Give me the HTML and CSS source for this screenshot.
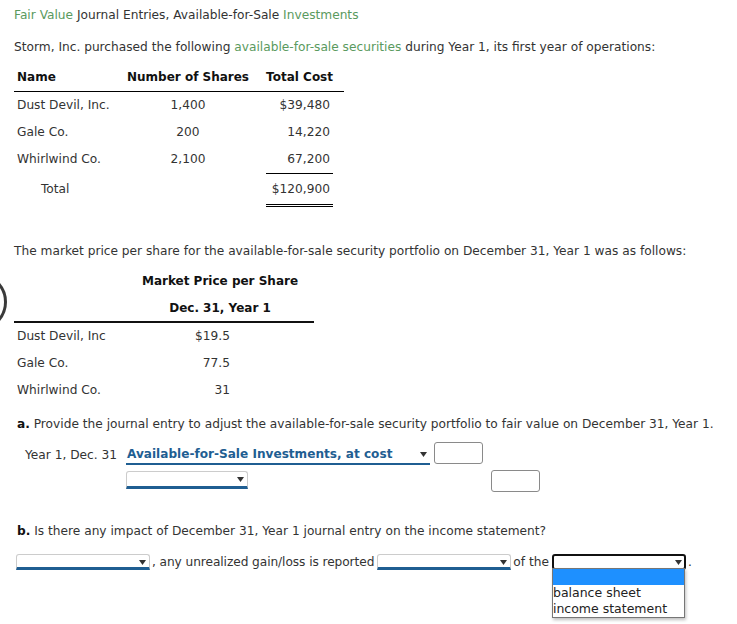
FILE: index.html
```html
<!DOCTYPE html>
<html>
<head>
<meta charset="utf-8">
<link rel="stylesheet" href="styles.css">
</head>
<body>
<div class="page">
  <div class="title"><span class="term">Fair Value</span> Journal Entries, Available-for-Sale <span class="term">Investments</span></div>
  <p class="intro">Storm, Inc. purchased the following <span class="term">available-for-sale securities</span> during Year 1, its first year of operations:</p>

  <div class="cost-table">
    <div class="th c1">Name</div>
    <div class="th c2">Number of Shares</div>
    <div class="th c3">Total Cost</div>
    <div class="th c4"></div>

    <div class="td c1">Dust Devil, Inc.</div>
    <div class="td c2">1,400</div>
    <div class="td c3">$39,480</div>
    <div class="td c4"></div>

    <div class="td c1">Gale Co.</div>
    <div class="td c2">200</div>
    <div class="td c3">14,220</div>
    <div class="td c4"></div>

    <div class="td c1">Whirlwind Co.</div>
    <div class="td c2">2,100</div>
    <div class="td c3 sub-line">67,200</div>
    <div class="td c4"></div>

    <div class="td c1 total-label">Total</div>
    <div class="td c2 total-row"></div>
    <div class="td c3 total-val">$120,900</div>
    <div class="td c4 total-row"></div>
  </div>

  <p class="market">The market price per share for the available-for-sale security portfolio on December 31, Year 1 was as follows:</p>

  <div class="price-table">
    <div class="ph">Market Price per Share</div>
    <div class="ph ph2">Dec. 31, Year 1</div>
    <div class="prow"><span class="pn">Dust Devil, Inc</span><span class="pv">$19.5</span></div>
    <div class="prow"><span class="pn">Gale Co.</span><span class="pv">77.5</span></div>
    <div class="prow"><span class="pn">Whirlwind Co.</span><span class="pv">31</span></div>
  </div>

  <p class="question qa"><b>a.</b> Provide the journal entry to adjust the available-for-sale security portfolio to fair value on December 31, Year 1.</p>

  <div class="entry-row">
    <span class="date">Year 1, Dec. 31</span>
    <span class="sel sel-filled sel-acct">Available-for-Sale Investments, at cost<svg class="arrow" width="7" height="5" viewBox="0 0 7 5"><path d="M0 0H7L3.5 5Z"/></svg></span>
    <span class="amt"></span>
  </div>
  <div class="entry-row row2">
    <span class="sel sel-credit"><svg class="arrow" width="7" height="5" viewBox="0 0 7 5"><path d="M0 0H7L3.5 5Z"/></svg></span>
    <span class="amt amt-credit"></span>
  </div>

  <p class="question qb"><b>b.</b> Is there any impact of December 31, Year 1 journal entry on the income statement?</p>

  <div class="answer-row">
    <span class="sel sel-b"><svg class="arrow" width="7" height="5" viewBox="0 0 7 5"><path d="M0 0H7L3.5 5Z"/></svg></span><span class="txt tight">, any unrealized gain/loss is reported</span>
    <span class="sel sel-b sel-b2"><svg class="arrow" width="7" height="5" viewBox="0 0 7 5"><path d="M0 0H7L3.5 5Z"/></svg></span><span class="txt of">of the</span>
    <div class="sel-wrap">
      <span class="sel sel-b sel-focus"><svg class="arrow" width="7" height="5" viewBox="0 0 7 5"><path d="M0 0H7L3.5 5Z"/></svg></span>
      <div class="listbox">
        <div class="opt opt-hl"></div>
        <div class="opt">balance sheet</div>
        <div class="opt">income statement</div>
      </div>
    </div><span class="txt">.</span>
  </div>
</div>
<div class="side-circle"></div>
</body>
</html>
```

FILE: styles.css
```css
html, body {
  margin: 0;
  padding: 0;
  background: #fff;
}
body {
  font-family: "DejaVu Sans", Verdana, sans-serif;
  font-size: 12.2px;
  color: #333;
  line-height: 16px;
  min-height: 624px;
  position: relative;
}
.page {
  padding: 7px 0 0 14px;
}
.term {
  color: #5a9a5e;
}
.title {
  height: 16px;
}
p {
  margin: 0;
}
.intro {
  margin-top: 16px;
}

/* cost table */
.cost-table {
  display: grid;
  grid-template-columns: 108px 144px 67px 11px;
  width: 330px;
  margin-top: 12px;
}
.th {
  font-weight: bold;
  font-size: 12px;
  color: #111;
  padding: 2px 0 6px;
  border-bottom: 1px solid #000;
}
.td {
  height: 27px;
  line-height: 27px;
}
.c1 { padding-left: 3px; }
.c2 { text-align: center; padding-right: 12px; }
.c3 { text-align: right; }
.td.c3 { padding-right: 3px; }
.sub-line {
  border-bottom: 1px solid #000;
}
.total-label {
  padding-left: 27px;
  height: 30px;
  line-height: 30px;
}
.total-row {
  height: 30px;
}
.total-val {
  height: 30px;
  line-height: 30px;
  border-bottom: 3px double #000;
}

/* market paragraph */
.market {
  margin-top: 36px;
}
.price-table {
  width: 300px;
  margin-top: 14px;
}
.ph {
  font-weight: bold;
  font-size: 12px;
  color: #111;
  text-align: center;
  padding-left: 112px;
  height: 27px;
  line-height: 16px;
}
.ph2 {
  height: 21px;
  border-bottom: 2px solid #111;
}
.prow {
  display: flex;
  height: 27px;
  line-height: 27px;
}
.pn {
  width: 147px;
  padding-left: 3px;
}
.pv {
  width: 66px;
  text-align: right;
}

/* questions */
.question {
  padding-left: 3px;
}
.question b {
  color: #111;
}
.qa {
  margin-top: 12px;
}
.entry-row {
  display: flex;
  align-items: flex-start;
  margin-top: 14px;
  height: 23px;
}
.date {
  margin-left: 11px;
  width: 101px;
  line-height: 18px;
  padding-top: 0;
}
.sel {
  position: relative;
  display: inline-block;
  box-sizing: border-box;
  background: #fff;
  height: 17px;
  border: 1px solid #ccc;
  border-bottom: 3px solid #1f5e92;
  border-radius: 3px 3px 0 0;
  vertical-align: middle;
}
.arrow {
  position: absolute;
  right: 3px;
  top: 5px;
  fill: #333;
}
.sel-filled {
  border: none;
  border-bottom: 2px solid #1f5e92;
  border-radius: 0;
  color: #1f5e92;
  font-weight: bold;
  width: 304px;
  height: 19px;
  line-height: 17px;
  font-size: 12.1px;
  padding-left: 1px;
}
.sel-filled .arrow {
  top: 6px;
  right: 3px;
}
.amt {
  display: inline-block;
  box-sizing: border-box;
  width: 49px;
  height: 22px;
  border: 1px solid #8a8a8a;
  border-radius: 3px;
  margin-left: 4px;
  margin-top: -4px;
}
.row2 {
  margin-top: 1px;
  height: 24px;
}
.sel-credit {
  margin-left: 112px;
  width: 122px;
  margin-top: 1px;
  height: 18px;
}
.amt-credit {
  margin-left: 243px;
  margin-top: 0;
}

.qb {
  margin-top: 29px;
}
.answer-row {
  display: flex;
  align-items: center;
  margin-top: 14px;
  margin-left: 2px;
  height: 17px;
}
.sel-b {
  width: 134px;
  height: 16px;
}
.txt {
  white-space: pre;
  margin-left: 2px;
}
.tight {
  letter-spacing: -0.08px;
}
.sel-b2 {
  margin-left: 3px;
}
.of {
  margin-left: 2px;
  margin-right: 3px;
}
.sel-wrap {
  position: relative;
  height: 16px;
  width: 134px;
}
.sel-focus {
  display: block;
  border: 2px solid #111;
  border-radius: 3px;
}
.sel-focus .arrow {
  top: 4px;
  right: 2px;
}
.listbox {
  position: absolute;
  left: 0;
  top: 14px;
  width: 133px;
  box-sizing: border-box;
  border: 1px solid #767676;
  background: #fff;
  box-shadow: 1px 2px 3px rgba(0,0,0,0.25);
  z-index: 2;
}
.opt {
  height: 16px;
  line-height: 16px;
  font-size: 12.5px;
  color: #222;
  white-space: nowrap;
}
.opt-hl {
  background: #1e90ff;
}

.side-circle {
  position: absolute;
  left: -51px;
  top: 273px;
  width: 52px;
  height: 52px;
  border: 3px solid #3a3a3a;
  border-radius: 50%;
}
```
